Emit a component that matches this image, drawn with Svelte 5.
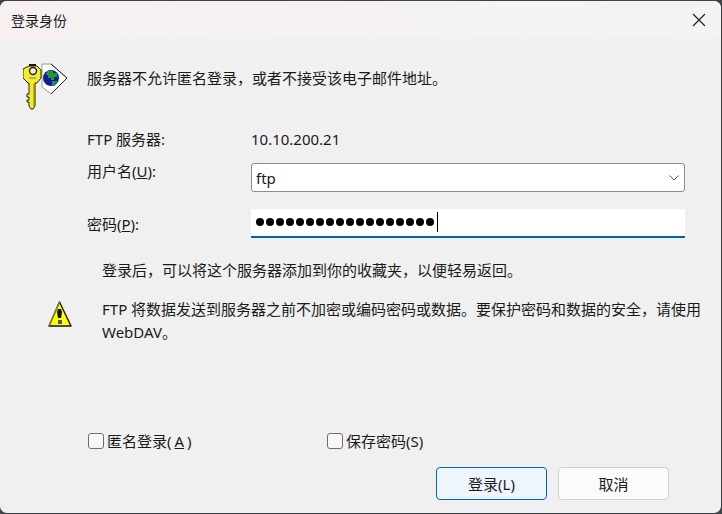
<script lang="ts">
  const dots = Array.from({ length: 18 })
</script>

<div class="screen">
  <div class="dialog">
    <header class="titlebar">
      <span class="title">登录身份</span>
      <svg class="close" width="14" height="14" viewBox="0 0 14 14">
        <path d="M1 1 L13 13 M13 1 L1 13" stroke="#1a1a1a" stroke-width="1.1" fill="none" />
      </svg>
    </header>

    <div class="body">
      <div class="intro">
        <svg class="key" width="46" height="50" viewBox="0 0 46 50">
          <!-- tag behind the key -->
          <path d="M19 1 H28 L44 15 L28 31 L19 24 Z" fill="#fff" stroke="#9a9a9a" stroke-width="1" />
          <path d="M28 1 L44 15 L28 31" fill="none" stroke="#222" stroke-width="1" />
          <!-- globe -->
          <circle cx="28" cy="15" r="8" fill="#101c9c" />
          <path d="M24 8 h6 v2 h4 v4 h-3 v3 h-3 v-2 h-3 v-3 h-2 v-2 h1 Z M29 18 h5 v2 h-2 v3 h-3 Z" fill="#1c9a2c" />
          <!-- key -->
          <path d="M6 1 h7 v2 h-7 Z" fill="#111" />
          <path d="M6 3 h8 l4 4 v8 l-4 5 h-2 v23 l-2 3 h-2 l-2 -3 v-4 h-2 v-2 h2 v-3 h-2 v-3 h2 v-11 h-1 l-5 -5 v-9 Z" fill="#f4ee1a" stroke="#222" stroke-width="1" />
          <circle cx="10" cy="8" r="3.5" fill="#eee" stroke="#222" stroke-width="1.4" />
          <path d="M6 14 h7 v2 h-7 Z" fill="#b0a890" />
          <path d="M11 21 v22" stroke="#8a8410" stroke-width="1" />
        </svg>
        <span>服务器不允许匿名登录，或者不接受该电子邮件地址。</span>
      </div>

      <div class="form">
        <span class="server-label">FTP 服务器:</span>
        <span class="server-value">10.10.200.21</span>

        <span class="field-label">用户名(<u>U</u>):</span>
        <div class="combo">
          <span>ftp</span>
          <svg width="10" height="6" viewBox="0 0 10 6">
            <path d="M0.5 0.5 L5 5 L9.5 0.5" stroke="#555" stroke-width="1" fill="none" />
          </svg>
        </div>

        <span class="field-label pass-label">密码(<u>P</u>):</span>
        <div class="password">
          {#each dots as _}
            <i class="dot"></i>
          {/each}
          <i class="caret"></i>
        </div>
      </div>

      <p class="hint">登录后，可以将这个服务器添加到你的收藏夹，以便轻易返回。</p>

      <div class="warning">
        <svg class="warn-icon" width="24" height="26" viewBox="0 0 24 26">
          <path d="M11.5 1 L23 25 H1 Z" fill="#ffff00" stroke="#111" stroke-width="1.4" stroke-linejoin="round" />
          <path d="M1 25 L11.5 1" stroke="#8a8a20" stroke-width="1.4" fill="none" />
          <path d="M10 8 h3 l1 3 -1 6 h-3 l-1 -6 Z" fill="#111" />
          <rect x="10" y="19" width="4" height="4" fill="#555" />
        </svg>
        <p>FTP 将数据发送到服务器之前不加密或编码密码或数据。要保护密码和数据的安全，请使用 WebDAV。</p>
      </div>

      <div class="checks">
        <label class="check"><i class="box"></i>匿名登录(<u>A</u>)</label>
        <label class="check"><i class="box"></i>保存密码(S)</label>
      </div>

      <div class="buttons">
        <button class="primary">登录(L)</button>
        <button>取消</button>
      </div>
    </div>
  </div>
</div>

<style>
  :global(body) {
    margin: 0;
    background: #3d4448;
  }

  .screen {
    width: 722px;
    height: 514px;
    box-sizing: border-box;
    padding: 1px 1px 1px 0;
    background: #3d4448;
    font-family: "Noto Sans", "Noto Sans CJK SC", sans-serif;
    font-size: 15px;
    color: #1a1a1a;
  }

  .dialog {
    height: 100%;
    display: flex;
    flex-direction: column;
    background: #f0f0f0;
    border-radius: 7px;
    overflow: hidden;
  }

  .titlebar {
    height: 37px;
    flex: none;
    display: flex;
    align-items: center;
    justify-content: space-between;
    padding: 0 15px 0 11px;
    background: linear-gradient(90deg, #f8f0f0, #f3f3f4);
  }

  .title {
    font-size: 14px;
  }

  .close {
    margin-top: 0;
  }

  .body {
    flex: 1;
    display: flex;
    flex-direction: column;
    padding: 25px 37px 13px 0;
  }

  .intro {
    display: flex;
    align-items: flex-start;
    padding-left: 23px;
  }

  .key {
    flex: none;
  }

  .intro span {
    margin-left: 18px;
    margin-top: 4px;
    line-height: 22px;
  }

  .form {
    display: grid;
    grid-template-columns: 164px 434px;
    margin: 15px 0 0 87px;
    align-items: center;
  }

  .server-label,
  .server-value {
    height: 22px;
    line-height: 22px;
  }

  .field-label {
    line-height: 22px;
  }

  .combo {
    margin-top: 13px;
    height: 29px;
    box-sizing: border-box;
    display: flex;
    align-items: center;
    justify-content: space-between;
    padding: 0 5px 0 4px;
    background: #fff;
    border: 1px solid #8c8c8c;
    border-radius: 3px;
  }

  .field-label:first-of-type {
    margin-top: 13px;
  }

  .password {
    margin-top: 17px;
    height: 29px;
    box-sizing: border-box;
    display: flex;
    align-items: center;
    gap: 2px;
    padding: 0 0 2px 5px;
    background: #fff;
    border-bottom: 2px solid #0063b1;
  }

  .pass-label {
    margin-top: 17px;
  }

  .dot {
    width: 8px;
    height: 8px;
    border-radius: 50%;
    background: #000;
  }

  .caret {
    width: 1px;
    height: 20px;
    margin-left: 1px;
    background: #000;
  }

  .hint {
    margin: 21px 0 0 102px;
    line-height: 22px;
  }

  .warning {
    display: flex;
    align-items: flex-start;
    margin: 17px 0 0 48px;
  }

  .warn-icon {
    flex: none;
    margin-top: 3px;
  }

  .warning p {
    margin: 0 -18px 0 30px;
    line-height: 23px;
  }

  .checks {
    display: flex;
    margin: auto 0 0 88px;
  }

  .check {
    width: 239px;
    display: flex;
    align-items: center;
    gap: 3px;
    line-height: 22px;
  }

  .box {
    width: 16px;
    height: 16px;
    box-sizing: border-box;
    background: #f8f8f8;
    border: 1px solid #6e6e6e;
    border-radius: 3px;
  }

  .buttons {
    display: flex;
    justify-content: flex-end;
    gap: 11px;
    margin-top: 15px;
    margin-right: 15px;
  }

  button {
    width: 111px;
    height: 33px;
    padding: 0;
    font: inherit;
    color: inherit;
    background: #fbfbfb;
    border: 1px solid #d0d0d0;
    border-radius: 4px;
  }

  .primary {
    background: #eff5fd;
    border-color: #0067c0;
  }
</style>
